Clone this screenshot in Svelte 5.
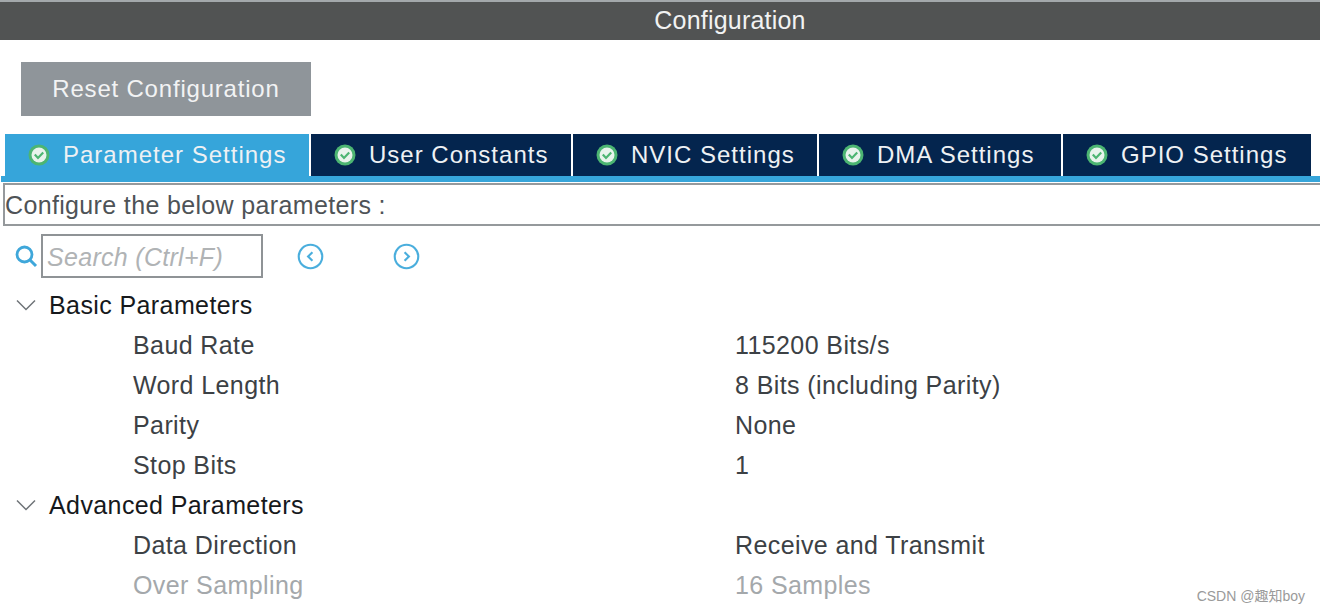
<script>
	const tabs = [
		{ label: 'Parameter Settings', active: true },
		{ label: 'User Constants' },
		{ label: 'NVIC Settings' },
		{ label: 'DMA Settings' },
		{ label: 'GPIO Settings' }
	];

	const groups = [
		{
			title: 'Basic Parameters',
			params: [
				{ name: 'Baud Rate', value: '115200 Bits/s' },
				{ name: 'Word Length', value: '8 Bits (including Parity)' },
				{ name: 'Parity', value: 'None' },
				{ name: 'Stop Bits', value: '1' }
			]
		},
		{
			title: 'Advanced Parameters',
			params: [
				{ name: 'Data Direction', value: 'Receive and Transmit' },
				{ name: 'Over Sampling', value: '16 Samples', disabled: true }
			]
		}
	];
</script>

<div class="page">
	<header class="title-bar">Configuration</header>

	<div class="reset-row">
		<button type="button" class="reset-btn">Reset Configuration</button>
	</div>

	<nav class="tabs">
		{#each tabs as tab (tab.label)}
			<div class="tab" class:active={tab.active}>
				<svg class="tab-check" viewBox="0 0 22 22" aria-hidden="true">
					<circle cx="11" cy="11" r="10.5" fill="#4cb572" />
					<circle cx="11" cy="11" r="7.5" fill="#e8f3ec" />
					<path d="M6.8 10.6l3.2 3.4 5.2-5.4" fill="none" stroke="#4cb572" stroke-width="2.2" />
				</svg>
				<span>{tab.label}</span>
			</div>
		{/each}
	</nav>
	<div class="tab-rule"></div>

	<div class="hint">Configure the below parameters :</div>

	<div class="search-row">
		<svg class="search-icon" viewBox="0 0 24 24" aria-hidden="true">
			<circle cx="10.5" cy="10.5" r="7.5" fill="none" stroke="#3fa7da" stroke-width="2.8" />
			<path d="M16 16l6 6" stroke="#3fa7da" stroke-width="3" />
		</svg>
		<div class="search-box">Search (Ctrl+F)</div>
		<svg class="nav-icon prev" viewBox="0 0 28 28" aria-hidden="true">
			<circle cx="14" cy="14" r="12.2" fill="none" stroke="#4aaedd" stroke-width="2.2" />
			<path d="M16 9.5L11.5 14l4.5 4.5" fill="none" stroke="#4aaedd" stroke-width="2.2" />
		</svg>
		<svg class="nav-icon next" viewBox="0 0 28 28" aria-hidden="true">
			<circle cx="14" cy="14" r="12.2" fill="none" stroke="#4aaedd" stroke-width="2.2" />
			<path d="M12 9.5l4.5 4.5-4.5 4.5" fill="none" stroke="#4aaedd" stroke-width="2.2" />
		</svg>
	</div>

	<div class="tree">
		{#each groups as group (group.title)}
			<div class="group-row">
				<svg class="chevron" viewBox="0 0 20 12" aria-hidden="true">
					<path d="M1 1.5l9 9 9-9" fill="none" stroke="#6f7478" stroke-width="1.5" />
				</svg>
				<span>{group.title}</span>
			</div>
			{#each group.params as param (param.name)}
				<div class="param-row" class:disabled={param.disabled}>
					<span class="param-name">{param.name}</span>
					<span>{param.value}</span>
				</div>
			{/each}
		{/each}
	</div>

	<div class="watermark">CSDN @趣知boy</div>
</div>

<style>
	:global(body) {
		margin: 0;
		background: #fff;
	}

	.page {
		position: relative;
		width: 1320px;
		height: 613px;
		overflow: hidden;
		font-family: 'Liberation Sans', Arial, sans-serif;
		font-size: 25px;
		letter-spacing: 0.4px;
		color: #16191c;
	}

	.title-bar {
		box-sizing: border-box;
		height: 40px;
		border-top: 2px solid #a3a8ab;
		background: #515353;
		color: #f1f2f2;
		text-align: center;
		line-height: 37px;
		padding-left: 140px;
		letter-spacing: 0.2px;
	}

	.reset-row {
		padding: 22px 0 18px 21px;
	}

	.reset-btn {
		display: block;
		width: 290px;
		height: 54px;
		padding: 0;
		border: 0;
		background: #8f959a;
		color: #f2f3f4;
		font: inherit;
		font-size: 24px;
		letter-spacing: 0.8px;
	}

	.tabs {
		display: grid;
		grid-template-columns: 306px 262px 246px 244px 248px;
		height: 42px;
		padding-left: 5px;
		font-size: 24px;
		letter-spacing: 1px;
		white-space: nowrap;
	}

	.tab {
		display: flex;
		align-items: center;
		gap: 13px;
		padding-left: 23px;
		background: #04254e;
		color: #eef1f4;
		border-right: 2px solid #fff;
	}

	.tab:last-child {
		border-right: 0;
	}

	.tab.active {
		background: #36a5da;
	}

	.tab-check {
		width: 22px;
		height: 22px;
		flex: none;
	}

	.tab-rule {
		height: 6px;
		margin-left: 1px;
		background: #36a5da;
	}

	.hint {
		box-sizing: border-box;
		height: 43px;
		margin: 1px 0 0 3px;
		border: solid #95999c;
		border-width: 2px 0 2px 2px;
		color: #4e5357;
		line-height: 40px;
		letter-spacing: 0.35px;
	}

	.search-row {
		display: flex;
		align-items: center;
		height: 44px;
		margin-top: 8px;
		padding-left: 14px;
	}

	.search-icon {
		width: 24px;
		height: 24px;
		margin-right: 3px;
	}

	.search-box {
		box-sizing: border-box;
		width: 222px;
		height: 44px;
		padding-left: 4px;
		border: 2px solid #8f9396;
		color: #b0b3b5;
		font-style: italic;
		line-height: 42px;
		letter-spacing: 0.3px;
	}

	.nav-icon {
		width: 27px;
		height: 27px;
	}

	.nav-icon.prev {
		margin-left: 34px;
	}

	.nav-icon.next {
		margin-left: 69px;
	}

	.tree {
		padding-top: 7px;
	}

	.group-row,
	.param-row {
		display: flex;
		align-items: center;
		height: 40px;
	}

	.group-row {
		padding-left: 16px;
	}

	.chevron {
		width: 20px;
		height: 12px;
		margin-right: 13px;
	}

	.param-row {
		padding-left: 133px;
		color: #3c4145;
	}

	.param-name {
		width: 602px;
	}

	.param-row.disabled {
		color: #a4a8ab;
	}

	.watermark {
		position: absolute;
		right: 15px;
		bottom: 8px;
		font-family: 'Liberation Sans', 'Noto Sans CJK SC', sans-serif;
		font-size: 14px;
		letter-spacing: 0;
		color: #9a9a9a;
	}
</style>
